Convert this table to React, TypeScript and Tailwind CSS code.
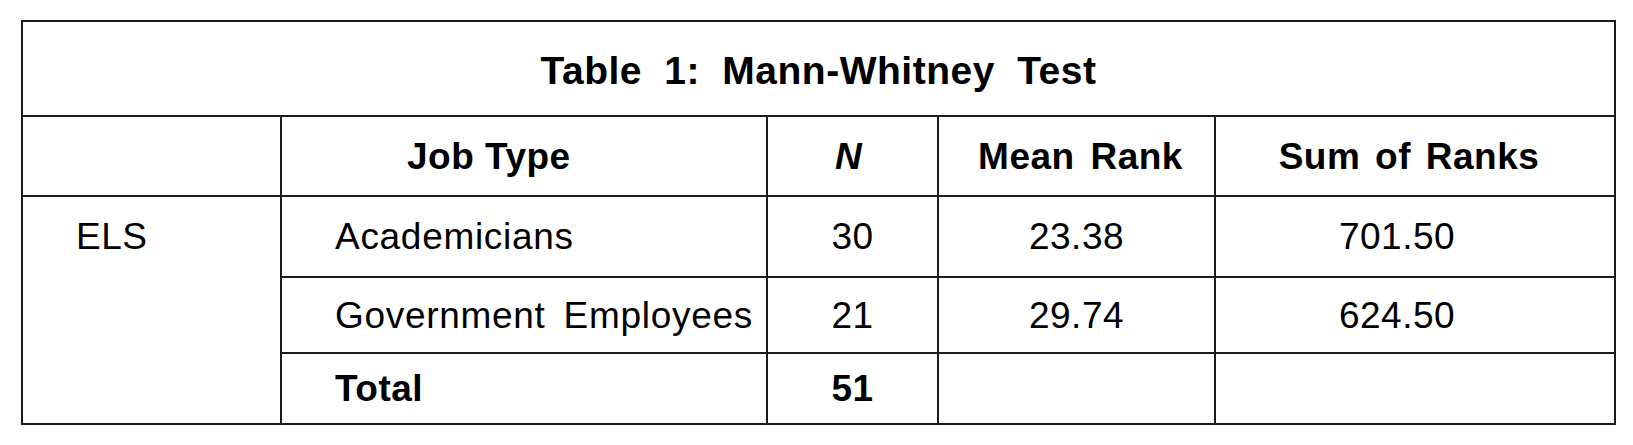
const rows = [
  { job: "Academicians", n: "30", mean: "23.38", sum: "701.50", h: "h-[81px]" },
  { job: "Government Employees", n: "21", mean: "29.74", sum: "624.50", h: "h-[76px]" },
];

export default function App() {
  const cell = "border-2 border-[#1c1c1c] p-0 align-middle";
  return (
    <div className="w-[1633px] h-[445px] bg-white pt-[20px] pl-[21px]">
      <table className="table-fixed border-collapse w-[1595px] font-['Liberation_Sans',Arial,sans-serif] text-[37px] leading-none tracking-[0.5px] text-black">
        <colgroup>
          <col className="w-[259px]" />
          <col className="w-[486px]" />
          <col className="w-[171px]" />
          <col className="w-[277px]" />
          <col className="w-[400px]" />
        </colgroup>
        <thead>
          <tr className="h-[95px]">
            <th colSpan={5} className={`${cell} font-bold text-center text-[39px] pt-[3px] [word-spacing:11px]`}>
              Table 1: Mann-Whitney Test
            </th>
          </tr>
          <tr className="h-[80px]">
            <th className={cell}></th>
            <th className={`${cell} font-bold text-left pl-[125px]`}>Job Type</th>
            <th className={`${cell} font-bold italic text-center pr-[8px]`}>N</th>
            <th className={`${cell} font-bold text-center pl-[8px] [word-spacing:5px]`}>Mean Rank</th>
            <th className={`${cell} font-bold text-center pr-[12px] [word-spacing:4px]`}>Sum of Ranks</th>
          </tr>
        </thead>
        <tbody>
          {rows.map((r, i) => (
            <tr key={r.job} className={r.h}>
              {i === 0 && (
                <td rowSpan={3} className={`${cell} align-top`}>
                  <div className="h-[79px] flex items-center pl-[53px]">ELS</div>
                </td>
              )}
              <td className={`${cell} text-left pl-[53px] tracking-[0.7px] [word-spacing:7px]`}>{r.job}</td>
              <td className={`${cell} text-center`}>{r.n}</td>
              <td className={`${cell} text-center`}>{r.mean}</td>
              <td className={`${cell} text-center pr-[36px]`}>{r.sum}</td>
            </tr>
          ))}
          <tr className="h-[71px]">
            <td className={`${cell} text-left pl-[53px] font-bold`}>Total</td>
            <td className={`${cell} text-center font-bold`}>51</td>
            <td className={cell}></td>
            <td className={cell}></td>
          </tr>
        </tbody>
      </table>
    </div>
  );
}
